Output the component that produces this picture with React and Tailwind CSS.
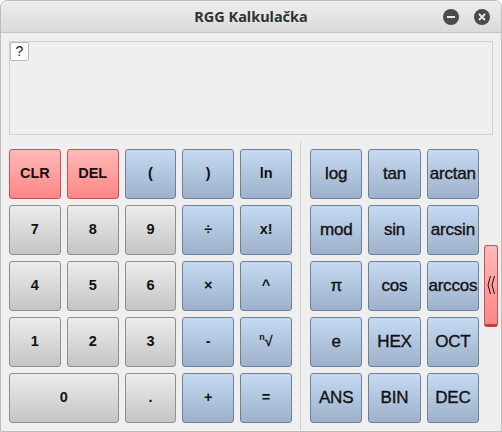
import React from "react";

const LEFT = [
  { t: "CLR", k: "red" },
  { t: "DEL", k: "red" },
  { t: "(", k: "blue" },
  { t: ")", k: "blue" },
  { t: "ln", k: "blue" },
  { t: "7", k: "gray" },
  { t: "8", k: "gray" },
  { t: "9", k: "gray" },
  { t: "÷", k: "blue" },
  { t: "x!", k: "blue" },
  { t: "4", k: "gray" },
  { t: "5", k: "gray" },
  { t: "6", k: "gray" },
  { t: "×", k: "blue" },
  { t: "^", k: "blue" },
  { t: "1", k: "gray" },
  { t: "2", k: "gray" },
  { t: "3", k: "gray" },
  { t: "-", k: "blue" },
  { t: "ⁿ√", k: "blue" },
  { t: "0", k: "gray", wide: true },
  { t: ".", k: "gray" },
  { t: "+", k: "blue" },
  { t: "=", k: "blue" },
];

const RIGHT = ["log", "tan", "arctan", "mod", "sin", "arcsin", "π", "cos", "arccos", "e", "HEX", "OCT", "ANS", "BIN", "DEC"];

const KIND = {
  red: "border-[#c85050] bg-gradient-to-b from-[#ffb9b9] to-[#ff8585]",
  blue: "border-[#6f809a] bg-gradient-to-b from-[#c6daf3] to-[#9eb1ca]",
  gray: "border-[#8e8e8e] bg-gradient-to-b from-[#ededed] to-[#c4c4c4]",
};

function Key({ t, k, wide }) {
  return (
    <button
      className={`${KIND[k]} ${wide ? "col-span-2" : ""} h-[50px] rounded-[3px] border text-[14.5px] font-bold text-[#111] flex items-center justify-center`}
    >
      {t === "ⁿ√" ? (
        <span>
          <span className="text-[9px] align-top">n</span>√
        </span>
      ) : (
        t
      )}
    </button>
  );
}

export default function App() {
  return (
    <div
      className="w-[502px] h-[432px] bg-[#efefef] rounded-t-[7px] overflow-hidden border border-[#bdbdbd]"
      style={{ fontFamily: '"Liberation Sans", Arial, sans-serif' }}
    >
      {/* title bar */}
      <div className="h-[32px] relative flex items-center justify-center bg-gradient-to-b from-[#eeeeee] to-[#dadada] border-b border-[#c4c4c4]">
        <span className="text-[14.5px] font-bold text-[#2e3436]" style={{ fontFamily: '"Noto Sans", sans-serif' }}>
          RGG Kalkulačka
        </span>
        <div className="absolute right-[11px] top-[8px] flex gap-[15px]">
          <div className="w-[16px] h-[16px] rounded-full bg-[#4a4a4a] flex items-center justify-center">
            <div className="w-[8px] h-[2px] bg-[#e8e8e8]" />
          </div>
          <div className="w-[16px] h-[16px] rounded-full bg-[#4a4a4a] flex items-center justify-center">
            <svg width="8" height="8" viewBox="0 0 8 8">
              <path d="M1 1L7 7M7 1L1 7" stroke="#e8e8e8" strokeWidth="1.8" />
            </svg>
          </div>
        </div>
      </div>

      {/* display */}
      <div className="mx-[8px] mt-[8px] h-[94px] border border-[#d2d2d2] bg-[#efefef] relative">
        <div className="w-[19px] h-[19px] bg-white border border-[#b9b9b9] rounded-[2px] flex items-center justify-center text-[14px] text-[#222]">
          ?
        </div>
      </div>

      {/* keypad */}
      <div className="mt-[6px] flex h-[289px]">
        <div className="ml-[8px] w-[283px] py-[8px] grid grid-cols-5 gap-[6px] content-start">
          {LEFT.map((b) => (
            <Key key={b.t} {...b} />
          ))}
        </div>
        <div className="ml-[8px] w-[1px] bg-[#d0d0d0]" />
        <div className="ml-[9px] w-[169px] py-[8px] grid grid-cols-3 gap-[6px] content-start">
          {RIGHT.map((t) => (
            <button
              key={t}
              className={`${KIND.blue} h-[50px] rounded-[3px] border text-[17px] text-[#111] flex items-center justify-center whitespace-nowrap tracking-[-0.2px] [-webkit-text-stroke:0.35px_#111]`}
            >
              {t}
            </button>
          ))}
        </div>
        <div className="ml-[5px] flex items-center">
          <div className="w-[14px] h-[82px] rounded-[3px] border border-[#c85050] border-b-[3px] border-b-[#c04040] bg-gradient-to-b from-[#ffb9b9] to-[#ff8585] flex items-center justify-center">
            <svg width="10" height="20" viewBox="0 0 10 20">
              <path d="M4.5 1L2 10L4.5 19M8.5 1L6 10L8.5 19" stroke="#111" strokeWidth="1" fill="none" />
            </svg>
          </div>
        </div>
      </div>
    </div>
  );
}
